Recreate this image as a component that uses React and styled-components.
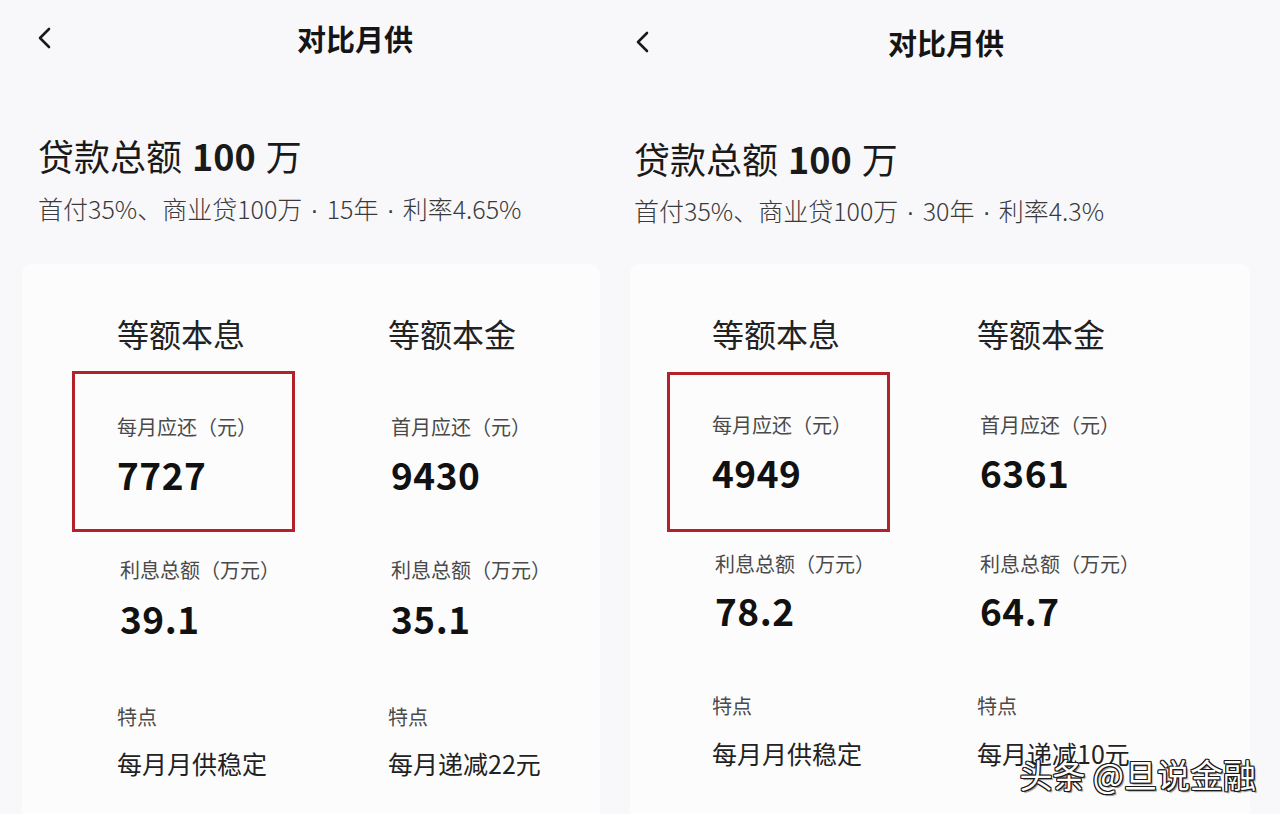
import React from "react"
import styled, { createGlobalStyle } from "styled-components"

const GlobalStyle = createGlobalStyle`
  html, body {
    margin: 0;
    padding: 0;
    background: #f8f8fa;
  }
  body {
    font-family: "Noto Sans CJK SC", "Noto Sans", sans-serif;
    color: #1a1a1a;
  }
`

const Page = styled.div`
  position: relative;
  display: flex;
  width: 1280px;
  height: 814px;
  overflow: hidden;
  gap: 3px;
`

const Panel = styled.section`
  display: flex;
  flex-direction: column;
  width: ${(p) => p.$width}px;
  flex-shrink: 0;
  background: #f8f8fa;
`

const Header = styled.header`
  display: flex;
  align-items: center;
  height: ${(p) => p.$height}px;
  padding-left: ${(p) => p.$left}px;
`

const BackIcon = styled.svg`
  width: 16px;
  height: 24px;
  flex-shrink: 0;
`

const Title = styled.h1`
  margin: 0 0 0 ${(p) => p.$offset}px;
  font-size: 29px;
  font-weight: 700;
  line-height: 36px;
  color: #151515;
`

const Summary = styled.div`
  display: flex;
  flex-direction: column;
  padding-left: ${(p) => p.$left}px;
  margin-top: ${(p) => p.$top}px;
  gap: ${(p) => p.$gap}px;
`

const Amount = styled.div`
  font-size: 36px;
  line-height: 44px;
  font-weight: 400;
  color: #1a1a1a;
  white-space: nowrap;

  b {
    font-weight: 700;
    margin: 0 10px 0 10px;
  }
`

const Terms = styled.div`
  font-size: 25px;
  line-height: 32px;
  font-weight: 300;
  color: #3a3a3a;
  white-space: nowrap;
`

const Dot = styled.span`
  font-family: "Liberation Sans", sans-serif;
  margin: 0 8px;
`

const Card = styled.div`
  flex: 1;
  display: flex;
  margin: ${(p) => p.$top}px ${(p) => p.$right}px 0 ${(p) => p.$left}px;
  padding: 49px 0 0 ${(p) => p.$inset}px;
  background: #fcfcfd;
  border-radius: 10px 10px 0 0;
`

const Column = styled.div`
  display: flex;
  flex-direction: column;
  width: ${(p) => p.$width}px;
  flex-shrink: 0;
`

const Method = styled.h2`
  margin: 0;
  font-size: 32px;
  line-height: 40px;
  font-weight: 400;
  color: #222;
  white-space: nowrap;
`

const Stat = styled.div`
  display: flex;
  flex-direction: column;
  box-sizing: border-box;
  width: ${(p) => (p.$boxed ? "223px" : "auto")};
  margin-top: ${(p) => p.$top}px;
  margin-left: ${(p) => (p.$boxed ? "-45px" : "0")};
  padding: ${(p) => p.$padTop}px 0 ${(p) => p.$padBottom}px ${(p) => (p.$boxed ? "42px" : "0")};
  border: 3px solid ${(p) => (p.$boxed ? "#b3222b" : "transparent")};
  gap: ${(p) => p.$gap}px;
`

const Label = styled.div`
  font-size: 20px;
  line-height: 28px;
  font-weight: 400;
  color: #4a4a4a;
  white-space: nowrap;
`

const Value = styled.div`
  font-size: 37px;
  line-height: 44px;
  font-weight: 700;
  color: #111;
  letter-spacing: 0.5px;
`

const Feature = styled.div`
  display: flex;
  flex-direction: column;
  margin-top: ${(p) => p.$top}px;
  gap: ${(p) => p.$gap}px;
`

const FeatureText = styled.div`
  font-size: 25px;
  line-height: 34px;
  font-weight: 400;
  color: #222;
  white-space: nowrap;
`

const Watermark = styled.div`
  position: absolute;
  right: 24px;
  bottom: 20px;
  font-size: 33px;
  line-height: 40px;
  font-weight: 400;
  color: #fff;
  white-space: nowrap;
  text-shadow:
    1px 0 0 #1a1a1a, -1px 0 0 #1a1a1a, 0 1px 0 #1a1a1a, 0 -1px 0 #1a1a1a,
    1px 1px 0 #1a1a1a, -1px -1px 0 #1a1a1a, 1px -1px 0 #1a1a1a, -1px 1px 0 #1a1a1a,
    2px 2px 1px rgba(0, 0, 0, 0.45);
`

const BackArrow = () => (
  <BackIcon viewBox="0 0 16 24" fill="none">
    <path
      d="M13 3 L4 12 L13 21"
      stroke="#1a1a1a"
      strokeWidth="2.6"
      strokeLinecap="round"
      strokeLinejoin="round"
    />
  </BackIcon>
)

const panels = [
  {
    width: 612,
    headerHeight: 76,
    headerLeft: 36,
    titleOffset: 245,
    left: 38,
    summaryTop: 57,
    summaryGap: 15,
    terms: ["首付35%、商业贷100万", "15年", "利率4.65%"],
    card: { top: 38, left: 22, right: 12, inset: 95 },
    colWidth: 271,
    box: { top: 18, padTop: 39, padBottom: 33, gap: 11 },
    interest: { top: 21, gap: 12 },
    feature: { top: 60, gap: 15 },
    methods: [
      { name: "等额本息", first: "每月应还（元）", pay: "7727", interest: "39.1", note: "每月月供稳定" },
      { name: "等额本金", first: "首月应还（元）", pay: "9430", interest: "35.1", note: "每月递减22元" },
    ],
  },
  {
    width: 665,
    headerHeight: 84,
    headerLeft: 19,
    titleOffset: 238,
    left: 19,
    summaryTop: 52,
    summaryGap: 14,
    terms: ["首付35%、商业贷100万", "30年", "利率4.3%"],
    card: { top: 36, left: 15, right: 30, inset: 82 },
    colWidth: 265,
    box: { top: 19, padTop: 36, padBottom: 35, gap: 11 },
    interest: { top: 15, gap: 10 },
    feature: { top: 57, gap: 16 },
    methods: [
      { name: "等额本息", first: "每月应还（元）", pay: "4949", interest: "78.2", note: "每月月供稳定" },
      { name: "等额本金", first: "首月应还（元）", pay: "6361", interest: "64.7", note: "每月递减10元" },
    ],
  },
]

const ComparePanel = ({ cfg }) => (
  <Panel $width={cfg.width}>
    <Header $height={cfg.headerHeight} $left={cfg.headerLeft}>
      <BackArrow />
      <Title $offset={cfg.titleOffset}>对比月供</Title>
    </Header>

    <Summary $left={cfg.left} $top={cfg.summaryTop} $gap={cfg.summaryGap}>
      <Amount>
        贷款总额<b>100</b>万
      </Amount>
      <Terms>
        {cfg.terms.map((t, i) => (
          <React.Fragment key={t}>
            {i > 0 && <Dot>·</Dot>}
            {t}
          </React.Fragment>
        ))}
      </Terms>
    </Summary>

    <Card
      $top={cfg.card.top}
      $left={cfg.card.left}
      $right={cfg.card.right}
      $inset={cfg.card.inset}
    >
      {cfg.methods.map((m, i) => (
        <Column key={m.name} $width={cfg.colWidth}>
          <Method>{m.name}</Method>
          <Stat
            $boxed={i === 0}
            $top={cfg.box.top}
            $padTop={cfg.box.padTop}
            $padBottom={cfg.box.padBottom}
            $gap={cfg.box.gap}
          >
            <Label>{m.first}</Label>
            <Value>{m.pay}</Value>
          </Stat>
          <Stat $top={cfg.interest.top} $padTop={0} $padBottom={0} $gap={cfg.interest.gap}>
            <Label>利息总额（万元）</Label>
            <Value>{m.interest}</Value>
          </Stat>
          <Feature $top={cfg.feature.top} $gap={cfg.feature.gap}>
            <Label>特点</Label>
            <FeatureText>{m.note}</FeatureText>
          </Feature>
        </Column>
      ))}
    </Card>
  </Panel>
)

const App = () => (
  <>
    <GlobalStyle />
    <Page>
      {panels.map((cfg) => (
        <ComparePanel key={cfg.terms[1]} cfg={cfg} />
      ))}
      <Watermark>头条 @旦说金融</Watermark>
    </Page>
  </>
)

export default App
